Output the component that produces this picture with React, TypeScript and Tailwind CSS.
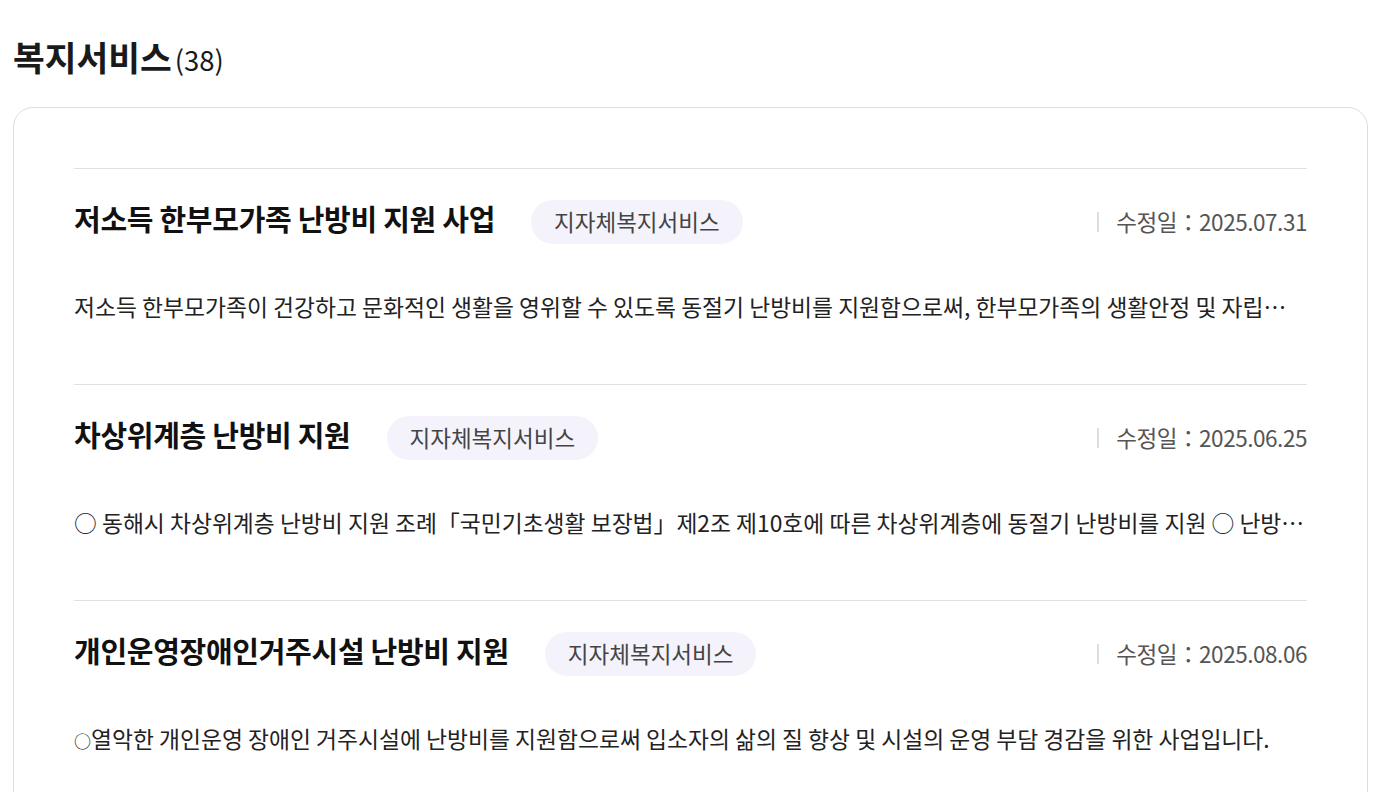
import React from "react";

const items = [
  {
    title: "저소득 한부모가족 난방비 지원 사업",
    date: "2025.07.31",
    desc: <>저소득 한부모가족이 건강하고 문화적인 생활을 영위할 수 있도록 동절기 난방비를 지원함으로써, 한부모가족의 생활안정 및 자립기반 조성에 기여하고자 합니다.</>,
  },
  {
    title: "차상위계층 난방비 지원",
    date: "2025.06.25",
    desc: <>○ 동해시 차상위계층 난방비 지원 조례「국민기초생활 보장법」제2조 제10호에 따른 차상위계층에 동절기 난방비를 지원 ○ 난방비 지원 대상 및 지원 기준</>,
  },
  {
    title: "개인운영장애인거주시설 난방비 지원",
    date: "2025.08.06",
    desc: (
      <>
        <span className="text-[17px]">○</span>열악한 개인운영 장애인 거주시설에 난방비를 지원함으로써 입소자의 삶의 질 향상 및 시설의 운영 부담 경감을 위한 사업입니다.
      </>
    ),
  },
];

export default function App() {
  return (
    <div
      className="min-h-screen bg-white pl-[13px] pr-[15px] pt-[36px]"
      style={{ fontFamily: '"Noto Sans CJK KR", "Noto Sans", sans-serif' }}
    >
      <h2 className="flex items-baseline h-[40px] leading-[40px] text-[#1a1a1a]">
        <span className="text-[34.5px] font-bold tracking-[0em]">복지서비스</span>
        <span className="ml-[3px] text-[27.5px] font-normal tracking-[0em]">(38)</span>
      </h2>
      <div className="mt-[31px] rounded-[20px] border border-[#dddddd] px-[60px] pt-[60px] pb-[40px]">
        {items.map((it, i) => (
          <div key={i} className="border-t border-[#e0e0e0] pt-[31px] pb-[62px]">
            <div className="flex h-[44px] items-center">
              <h3 className="text-[29px] font-bold tracking-[-0.01em] text-[#111] leading-[44px] -mt-[8px]">
                {it.title}
              </h3>
              <span className="ml-[36px] inline-flex h-[44px] items-center rounded-full bg-[#f4f3fb] px-[23px] text-[22.5px] tracking-[0em] text-[#444]">
                지자체복지서비스
              </span>
              <div className="ml-auto flex items-center text-[22.5px] tracking-[-0.02em] text-[#555]">
                <span className="mr-[17px] h-[20px] w-[2px] bg-[#dedede]" />
                <span>수정일：{it.date}</span>
              </div>
            </div>
            <p className="mt-[48px] h-[30px] truncate text-[22.8px] leading-[30px] tracking-[0em] text-[#222]">
              {it.desc}
            </p>
          </div>
        ))}
      </div>
    </div>
  );
}
